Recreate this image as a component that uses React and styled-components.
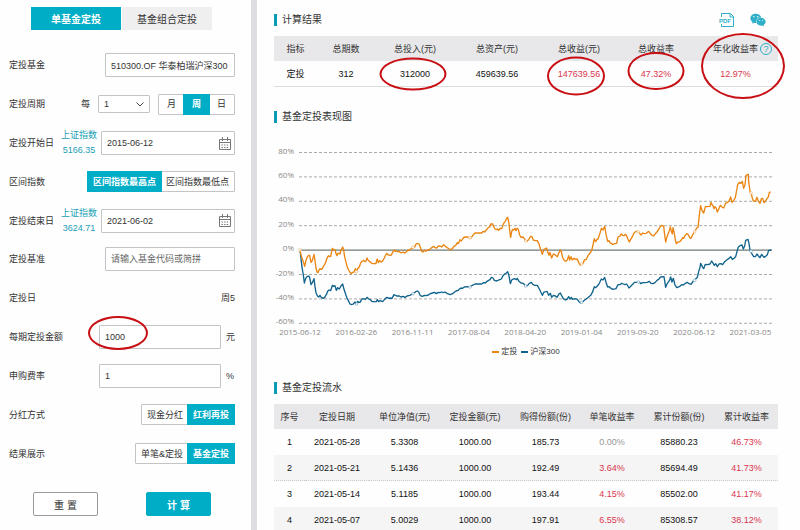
import React from "react";
import styled, { createGlobalStyle } from "styled-components";
import { FaWeixin } from "react-icons/fa";

const resultColumns = [
  { title: "指标", width: 43 },
  { title: "总期数", width: 58 },
  { title: "总投入(元)", width: 80 },
  { title: "总资产(元)", width: 84 },
  { title: "总收益(元)", width: 80 },
  { title: "总收益率", width: 74 },
  { title: "年化收益率", width: 85, help: true },
];

const flowColumns = [
  { title: "序号", width: 31 },
  { title: "定投日期", width: 64 },
  { title: "单位净值(元)", width: 71 },
  { title: "定投金额(元)", width: 70 },
  { title: "购得份额(份)", width: 71 },
  { title: "单笔收益率", width: 62 },
  { title: "累计份额(份)", width: 72 },
  { title: "累计收益率", width: 63 },
];

const flowRows = [
  ["1", "2021-05-28", "5.3308", "1000.00", "185.73", "0.00%", "85880.23", "46.73%"],
  ["2", "2021-05-21", "5.1436", "1000.00", "192.49", "3.64%", "85694.49", "41.73%"],
  ["3", "2021-05-14", "5.1185", "1000.00", "193.44", "4.15%", "85502.00", "41.17%"],
  ["4", "2021-05-07", "5.0029", "1000.00", "197.91", "6.55%", "85308.57", "38.12%"],
];

const yTicks = ["80%", "60%", "40%", "20%", "0%", "-20%", "-40%", "-60%"];
const xTicks = [
  "2015-06-12",
  "2016-02-26",
  "2016-11-11",
  "2017-08-04",
  "2018-04-20",
  "2019-01-04",
  "2019-09-20",
  "2020-06-12",
  "2021-03-05",
];

// each series is kept in three stretches: [start x, points]
const planSeries = [
  [0, "105,330 108,345 112,358 115,365 119,379 123,361 128,349 132,346 134,347 138,367 142,361 147,343 150,362 153,384 156,396 159,398 162,390 165,386 168,388 172,386 176,378 181,370 185,358 188,350 191,347 194,350 197,349 202,325 205,328 207,329 210,329 213,341 216,347 219,340 222,340 225,342 228,330 233,321 236,330 239,350 243,367 248,385 251,390 255,397 259,401 263,397 267,396 271,386 274,395 278,385 281,384 283,380 287,369 290,365 293,363 296,361 299,364 302,365 306,354 309,360 312,363 316,366 320,370 325,371 333,371 335,361 337,357 340,368 344,362 348,366 352,364 358,354 362,345 365,340 369,344 374,346 379,345 384,335 388,330 391,334 394,332 398,335 402,334 407,338 411,338 415,336 419,339 424,335 429,330 434,331 439,325 444,322 449,322 453,312 457,310 462,312 466,322 470,334 474,336 479,331 483,334 488,330 494,328 500,323 506,319 510,323 515,324 520,318"],
  [525, "0,318 5,321 11,314 16,319 22,323 30,329 36,327 42,319 47,316 52,308 55,311 60,299 64,303 68,297 73,291 77,292 81,290 86,293 91,296 96,290 100,284 105,279 125,279 130,274 134,276 139,270 143,265 146,262 150,260 152,252 158,252 161,260 165,267 169,269 173,267 176,271 180,265 185,266 188,259 191,250 196,244 200,235 203,232 206,245 209,270 212,292 215,275 218,268 221,270 225,265 228,272 231,265 235,268 239,285 243,292 249,291 253,296 257,303 261,304 265,300 270,292 273,289 276,290 280,300 286,302 292,302 297,312 302,328 307,343 312,328 317,326 320,324 323,335 327,346 330,337 335,354 340,342 345,344 352,350 357,338 361,330 364,335 368,353 374,363 378,363 382,360 386,347 389,360 393,350 397,360 402,355 407,358 412,357 417,370 421,375 425,372 430,369 433,360 439,358 444,347 450,339 455,332 459,315 463,296 467,305 471,298 474,297 479,283 484,265 489,270 494,259 499,287 503,304 507,302"],
  [1035, "0,308 8,313 14,311 20,310 24,291 29,289 34,282 38,286 42,287 46,283 50,287 55,300 58,306 62,298 67,290 71,281 75,276 80,274 85,275 89,280 93,285 98,279 103,281 109,280 113,276 116,274 121,281 126,286 131,288 136,281 140,277 145,270 150,261 156,256 161,258 164,285 167,306 171,290 174,282 177,275 181,261 185,277 187,282 189,263 193,280 196,300 199,311 204,306 209,305 214,300 218,293 221,295 225,287 230,281 235,284 239,293 243,295 247,287 252,276 256,272 260,264 264,262 267,235 270,210 272,197 276,212 281,219 286,200 291,200 300,199 303,187 306,193 309,197 312,206 315,200 319,205 322,216 326,208 331,196 336,201 341,204 347,189 352,188 357,183 362,171 366,187 370,183 376,173 379,156 383,134 388,127 393,130 397,124 401,145 405,135 408,106 415,103 416,125 419,146 421,157 424,161 427,175 430,183 436,184 441,172 445,184 450,190 454,176 458,175 462,188 466,184 471,176 475,171 478,157 482,156"],
];

const indexSeries = [
  [0, "105,330 108,355 111,382 115,405 118,429 122,415 126,410 131,408 134,412 138,434 142,428 147,416 150,440 153,458 157,467 161,471 165,466 169,472 174,475 179,472 184,464 188,454 192,450 197,452 202,436 205,439 210,437 214,451 218,443 223,447 228,438 233,432 237,448 242,463 246,474 250,482 255,492 260,494 265,492 270,486 275,492 278,484 281,487 285,487 290,478 294,476 301,478 306,472 311,477 316,479 322,485 334,485 337,479 341,485 345,482 353,485 358,479 362,475 366,472 371,475 376,474 381,475 387,464 395,468 403,468 408,471 414,469 420,472 426,468 434,466 440,463 446,460 452,455 457,453 461,456 466,467 472,469 478,466 484,467 490,465 496,461 502,459 508,457 514,461 520,457"],
  [525, "0,458 5,456 10,458 15,456 21,460 30,464 38,461 44,456 50,452 54,452 57,448 63,444 68,445 73,441 82,440 90,441 97,436 105,432 125,432 131,428 136,429 141,424 146,421 150,419 154,412 159,414 163,421 168,423 174,421 179,419 184,417 189,407 194,402 199,399 203,395 207,407 211,431 215,420 220,417 225,416 229,419 232,415 237,424 243,429 250,430 257,439 263,436 268,430 274,427 279,434 285,436 292,436 298,447 307,466 312,456 318,455 321,454 326,466 331,460 335,472 340,466 346,468 351,472 356,463 361,459 365,467 370,476 376,480 381,478 386,470 390,477 394,472 398,478 405,476 412,478 417,485 422,489 428,485 434,480 439,477 446,471 453,465 458,455 463,440 467,443 472,438 478,430 484,417 489,420 494,412 499,430 503,441 508,440"],
  [1035, "0,443 8,448 18,446 24,434 30,434 35,430 40,432 45,434 50,432 57,444 63,438 68,433 73,427 80,427 87,425 92,431 98,428 103,428 112,427 118,424 123,430 129,431 135,428 141,421 147,417 152,411 162,410 167,442 172,430 178,422 182,411 186,426 190,415 195,435 200,443 208,440 215,434 220,435 226,430 232,427 237,431 243,433 250,423 256,418 262,412 266,395 270,382 272,370 277,380 281,386 286,373 293,374 300,372 305,363 310,371 313,376 317,371 322,380 327,372 333,371 338,374 344,365 350,360 356,356 362,350 367,358 372,355 377,350 381,335 385,321 390,317 396,315 400,327 404,318 407,301 414,298 417,310 420,330 425,340 431,350 436,350 441,342 446,349 450,353 455,343 462,352 467,349 472,344 476,331 484,330"],
];

// small hollow dots drawn where a series crosses a date tick
const planDots = [[105, 330], [274, 395], [444, 322], [615, 293], [782, 303], [950, 372], [1120, 275], [1289, 275], [1458, 159]];
const indexDots = [[275, 492], [444, 461], [615, 441], [782, 438], [950, 487], [1120, 426], [1289, 421], [1458, 334]];

function joinSeries(series) {
  return series
    .map(([start, points]) =>
      points
        .split(" ")
        .map((p) => {
          const [x, y] = p.split(",").map(Number);
          return `${x + start},${y}`;
        })
        .join(" ")
    )
    .join(" ");
}

function CalendarIcon() {
  return (
    <svg width="12" height="13" viewBox="0 0 12 13" fill="none" stroke="#777">
      <path d="M.5 2.5h11v10H.5zM.5 5.5h11M3.5 0v4M8.5 0v4" />
      <path d="M2.5 8h7M2.5 10.5h7" strokeDasharray="1.4 1.2" />
    </svg>
  );
}

function PdfIcon() {
  return (
    <svg width="16" height="16" viewBox="0 0 16 16" fill="none" stroke="#2fb0c8">
      <path d="M2.5 5V1.500h9l3 3V14.500h-12V12M11 1.500V5h3.500" />
      <text x="0" y="10.500" fontSize="6" fontWeight="700" fill="#2fb0c8" stroke="none">
        PDF
      </text>
    </svg>
  );
}

function Segment({ name, label, options, value }) {
  const [current, setCurrent] = React.useState(value);
  return (
    <SegmentBox role="radiogroup" aria-label={label}>
      {options.map((option) => (
        <SegmentItem key={option} $active={option === current}>
          <input
            type="radio"
            name={name}
            checked={option === current}
            onChange={() => setCurrent(option)}
          />
          {option}
        </SegmentItem>
      ))}
    </SegmentBox>
  );
}

function DateRow({ id, label, indexValue, value }) {
  return (
    <Row>
      <Label htmlFor={id}>{label}</Label>
      <Controls>
        <IndexHint>
          上证指数
          <span>{indexValue}</span>
        </IndexHint>
        <DateBox>
          <input id={id} defaultValue={value} />
          <CalendarIcon />
        </DateBox>
      </Controls>
    </Row>
  );
}

function Chart() {
  return (
    <ChartSvg viewBox="0 0 504 200" role="img" aria-label="基金定投表现图">
      {yTicks.map((tick, i) => {
        const y = 12.5 + i * 24.4;
        return (
          <g key={tick}>
            <text x="20" y={y + 1} textAnchor="end">
              {tick}
            </text>
            {tick === "0%" ? (
              <path d={`M25 ${y}H498`} stroke="#4d5c57" />
            ) : (
              <path d={`M25 ${y}H498`} stroke="#aaa" strokeDasharray="3 2" />
            )}
          </g>
        );
      })}
      {xTicks.map((tick, i) => (
        <text key={tick} x={26 + i * 56.3} y="195" textAnchor="middle">
          {tick}
        </text>
      ))}
      <g transform="translate(-9 0) scale(.33333)" fill="none" strokeLinejoin="round">
        <polyline points={joinSeries(indexSeries)} stroke="#10638c" strokeWidth="4" />
        <polyline points={joinSeries(planSeries)} stroke="#ea8511" strokeWidth="4" />
        {indexDots.map(([x, y]) => (
          <circle key={x} cx={x} cy={y} r="4" fill="#fff" stroke="#7ba8c0" strokeWidth="2" />
        ))}
        {planDots.map(([x, y]) => (
          <circle key={x} cx={x} cy={y} r="4" fill="#fff" stroke="#f0b46c" strokeWidth="2" />
        ))}
      </g>
    </ChartSvg>
  );
}

function TableHead({ columns }) {
  return (
    <>
      <colgroup>
        {columns.map((c) => (
          <col key={c.title} style={{ width: `${(c.width / 504) * 100}%` }} />
        ))}
      </colgroup>
      <thead>
        <tr>
          {columns.map((c) => (
            <th key={c.title}>
              {c.title}
              {c.help && <Help aria-label="说明">?</Help>}
            </th>
          ))}
        </tr>
      </thead>
    </>
  );
}

export default function App() {
  return (
    <Page>
      <GlobalStyle />
      <Sidebar onSubmit={(e) => e.preventDefault()}>
        <Tabs>
          <Tab type="button" $active>
            单基金定投
          </Tab>
          <Tab type="button">基金组合定投</Tab>
        </Tabs>
        <Rows>
          <Row>
            <Label htmlFor="fund">定投基金</Label>
            <Field id="fund" $width={130} defaultValue="510300.OF 华泰柏瑞沪深300" />
          </Row>
          <Row>
            <Label htmlFor="period">定投周期</Label>
            <Controls $gap={8}>
              每
              <SelectBox>
                <select id="period" defaultValue="1">
                  <option>1</option>
                  <option>2</option>
                </select>
                <svg width="8" height="5" viewBox="0 0 8 5" fill="none" stroke="#444">
                  <path d="M.5 .5L4 4L7.500 .5" />
                </svg>
              </SelectBox>
              <Segment name="unit" label="周期单位" options={["月", "周", "日"]} value="周" />
            </Controls>
          </Row>
          <DateRow id="start" label="定投开始日" indexValue="5166.35" value="2015-06-12" />
          <Row>
            <Label as="span">区间指数</Label>
            <Segment
              name="range"
              label="区间指数"
              options={["区间指数最高点", "区间指数最低点"]}
              value="区间指数最高点"
            />
          </Row>
          <DateRow id="end" label="定投结束日" indexValue="3624.71" value="2021-06-02" />
          <Row>
            <Label htmlFor="base">定投基准</Label>
            <Field id="base" $width={130} placeholder="请输入基金代码或简拼" />
          </Row>
          <Row>
            <Label as="span">定投日</Label>
            <span>周5</span>
          </Row>
          <Row>
            <Label htmlFor="amount">每期定投金额</Label>
            <Controls $gap={5}>
              <Marked>
                <Field id="amount" $width={122} defaultValue="1000" />
                <Ring $width={60} $height={34} $dx={-42} $dy={-4} />
              </Marked>
              <Unit>元</Unit>
            </Controls>
          </Row>
          <Row>
            <Label htmlFor="fee">申购费率</Label>
            <Controls $gap={5}>
              <Field id="fee" $width={122} defaultValue="1" />
              <Unit>%</Unit>
            </Controls>
          </Row>
          <Row>
            <Label as="span">分红方式</Label>
            <Segment
              name="bonus"
              label="分红方式"
              options={["现金分红", "红利再投"]}
              value="红利再投"
            />
          </Row>
          <Row>
            <Label as="span">结果展示</Label>
            <Segment
              name="show"
              label="结果展示"
              options={["单笔&定投", "基金定投"]}
              value="基金定投"
            />
          </Row>
        </Rows>
        <Actions>
          <Button type="reset">重 置</Button>
          <Button type="submit" $primary>
            计 算
          </Button>
        </Actions>
      </Sidebar>

      <Main>
        <Section>
          <TitleBar>
            <Title>计算结果</Title>
            <Tools>
              <IconButton aria-label="导出PDF">
                <PdfIcon />
              </IconButton>
              <IconButton aria-label="分享到微信">
                <FaWeixin size={16} />
              </IconButton>
            </Tools>
          </TitleBar>
          <ResultTable>
            <TableHead columns={resultColumns} />
            <tbody>
              <tr>
                <td>定投</td>
                <td>312</td>
                <td>
                  <Marked>
                    312000
                    <Ring $width={67} $height={33} $dx={-2} />
                  </Marked>
                </td>
                <td>459639.56</td>
                <Rise>
                  <Marked>
                    147639.56
                    <Ring $width={58} $height={39} $dx={-3} $dy={2} />
                  </Marked>
                </Rise>
                <Rise>
                  <Marked>
                    47.32%
                    <Ring $width={57} $height={38} $dy={-3} />
                  </Marked>
                </Rise>
                <Rise>
                  <Marked>
                    12.97%
                    <Ring $width={84} $height={66} $dx={7} $dy={-8} />
                  </Marked>
                </Rise>
              </tr>
            </tbody>
          </ResultTable>
        </Section>

        <Section>
          <Title>基金定投表现图</Title>
          <Chart />
          <Legend>
            <LegendItem $color="#ea8511">定投</LegendItem>
            <LegendItem $color="#10638c">沪深300</LegendItem>
          </Legend>
        </Section>

        <Section>
          <Title>基金定投流水</Title>
          <FlowTable>
            <TableHead columns={flowColumns} />
            <tbody>
              {flowRows.map((row) => (
                <tr key={row[0]}>
                  {row.map((cell, i) => {
                    if (!cell.endsWith("%")) return <td key={i}>{cell}</td>;
                    return (
                      <Rise key={i} $flat={cell === "0.00%"}>
                        {cell}
                      </Rise>
                    );
                  })}
                </tr>
              ))}
            </tbody>
          </FlowTable>
        </Section>
      </Main>
    </Page>
  );
}

const GlobalStyle = createGlobalStyle`
  * {
    box-sizing: border-box;
  }
  html {
    scrollbar-width: none;
  }
  body {
    margin: 0;
    background: #fefefe;
  }
  body, button, input, select {
    font-family: "Liberation Sans", "Noto Sans CJK SC", sans-serif;
    font-size: 9px;
    color: #333;
  }
`;

const Page = styled.div`
  display: grid;
  grid-template-columns: 251px 1fr;
  line-height: 12px;
`;

const Sidebar = styled.form`
  display: flex;
  flex-direction: column;
  height: 100vh;
  min-height: 480px;
  padding: 7px 16px 14px 9px;
`;

const Tabs = styled.div`
  display: flex;
  gap: 1px;
  padding-left: 22px;
`;

const Tab = styled.button`
  width: 90px;
  height: 23px;
  padding: 0;
  border: none;
  font-size: 10px;
  font-weight: ${(p) => (p.$active ? 700 : 400)};
  color: ${(p) => (p.$active ? "#fff" : "#333")};
  background: ${(p) => (p.$active ? "#00adc6" : "#efefef")};
`;

const Rows = styled.div`
  flex: 1;
  display: flex;
  flex-direction: column;
  padding: 16px 0 19px;
`;

const Row = styled.div`
  flex: 1;
  display: flex;
  align-items: center;
  justify-content: space-between;
`;

const Label = styled.label`
  white-space: nowrap;
`;

const Controls = styled.div`
  display: flex;
  align-items: center;
  gap: ${(p) => p.$gap || 4}px;
`;

const Field = styled.input`
  display: block;
  width: ${(p) => p.$width}px;
  height: 24px;
  padding: 0 5px;
  border: 1px solid #c4c4c4;
  border-radius: 1px;
  background: #fff;
  outline: none;

  &::placeholder {
    color: #666;
  }
`;

const Unit = styled.span`
  width: 9px;
`;

const SelectBox = styled.div`
  position: relative;
  display: flex;

  select {
    width: 52px;
    height: 18px;
    padding: 0 5px;
    border: 1px solid #c4c4c4;
    border-radius: 1px;
    background: #fff;
    appearance: none;
  }

  svg {
    position: absolute;
    right: 6px;
    top: 7px;
    pointer-events: none;
  }
`;

const DateBox = styled.div`
  display: flex;
  align-items: center;
  width: 134px;
  height: 24px;
  padding: 0 3px 0 5px;
  border: 1px solid #c4c4c4;
  border-radius: 1px;
  background: #fff;

  input {
    flex: 1;
    min-width: 0;
    padding: 0;
    border: none;
    outline: none;
  }
`;

const IndexHint = styled.div`
  display: flex;
  flex-direction: column;
  align-items: center;
  line-height: 15px;
  color: #1a9fb5;
`;

const SegmentBox = styled.div`
  display: flex;
  height: 21px;
  border: 1px solid #c4c4c4;
  border-radius: 1px;
  background: #fff;
`;

const SegmentItem = styled.label`
  display: flex;
  align-items: center;
  justify-content: center;
  min-width: 27px;
  margin: -1px;
  padding: 0 6px;
  white-space: nowrap;
  font-weight: ${(p) => (p.$active ? 700 : 400)};
  color: ${(p) => (p.$active ? "#fff" : "#333")};
  background: ${(p) => (p.$active ? "#00adc6" : "none")};

  input {
    appearance: none;
    position: absolute;
    margin: 0;
  }
`;

const Actions = styled.div`
  display: flex;
  justify-content: space-between;
  padding: 0 24px;
`;

const Button = styled.button`
  width: 65px;
  height: 24px;
  padding: 0;
  border: 1px solid ${(p) => (p.$primary ? "#00adc6" : "#999")};
  border-radius: 2px;
  font-size: 10px;
  font-weight: ${(p) => (p.$primary ? 700 : 400)};
  color: ${(p) => (p.$primary ? "#fff" : "#333")};
  background: ${(p) => (p.$primary ? "#00adc6" : "#fff")};
`;

const Main = styled.main`
  display: flex;
  flex-direction: column;
  gap: 24px;
  min-width: 0;
  padding: 14px 22px 0 17px;
  border-left: 6px solid #dedde1;
`;

const Section = styled.section`
  display: flex;
  flex-direction: column;
`;

const TitleBar = styled.div`
  display: flex;
  align-items: center;
  justify-content: space-between;
  height: 12px;
`;

const Title = styled.h2`
  margin: 0;
  padding-left: 5px;
  border-left: 3px solid #0a9cb4;
  font-size: 10px;
  font-weight: 400;
  line-height: 12px;
`;

const Tools = styled.div`
  display: flex;
  gap: 15px;
  padding-right: 12px;
`;

const IconButton = styled.button`
  display: flex;
  padding: 0;
  border: none;
  background: none;
  color: #2fb0c8;
`;

const Table = styled.table`
  width: 100%;
  margin-top: 10px;
  table-layout: fixed;
  border-collapse: separate;
  border-spacing: 0;
  text-align: center;
  white-space: nowrap;

  th {
    height: 25px;
    padding: 0;
    font-weight: 400;
    background: #e8e7e9;
  }

  td {
    height: 26px;
    padding: 0;
    color: #111;
  }
`;

const ResultTable = styled(Table)`
  td {
    border-bottom: 1px solid #ddd;
  }
`;

const FlowTable = styled(Table)`
  tbody tr:nth-child(even) td {
    background: #f5f5f6;
    border-bottom: 1px dotted #ccc;
  }
`;

const Rise = styled.td`
  && {
    color: ${(p) => (p.$flat ? "#999" : "#d9364c")};
  }
`;

const Help = styled.button`
  width: 12px;
  height: 12px;
  margin: 0 -14px 0 2px;
  padding: 0;
  border: 1px solid #2fb0c8;
  border-radius: 50%;
  line-height: 10px;
  color: #2fb0c8;
  background: none;
`;

const Marked = styled.span`
  position: relative;
  display: inline-block;
`;

/* red ring laid over a value, $dx/$dy shift its centre */
const Ring = styled.span`
  position: absolute;
  left: calc(50% + ${(p) => p.$dx || 0}px);
  top: calc(50% + ${(p) => p.$dy || 0}px);
  width: ${(p) => p.$width}px;
  height: ${(p) => p.$height}px;
  transform: translate(-50%, -50%);
  border: 2px solid #c80f14;
  border-radius: 50%;
  pointer-events: none;
`;

const ChartSvg = styled.svg`
  display: block;
  width: 100%;
  margin-top: 17px;

  > text, > g > text {
    font-family: "Open Sans", "Noto Sans", sans-serif;
    font-size: 8px;
    fill: #888;
  }
`;

const Legend = styled.div`
  display: flex;
  justify-content: center;
  gap: 4px;
  padding-top: 6px;
  font-size: 8px;
`;

const LegendItem = styled.span`
  display: flex;
  align-items: center;
  gap: 2px;

  &::before {
    content: "";
    width: 7px;
    height: 2px;
    background: ${(p) => p.$color};
  }
`;
